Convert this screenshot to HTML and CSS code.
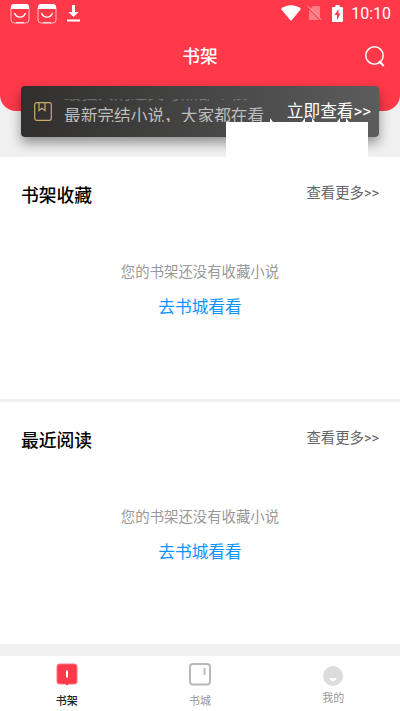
FILE: index.html
```html
<!DOCTYPE html>
<html lang="zh-CN">
<head>
    <meta charset="UTF-8">
    <meta name="viewport" content="width=device-width, initial-scale=1.0">
    <title>书架</title>
    <link rel="stylesheet" href="styles.css">
</head>
<body>
    <header class="header">
        <div class="status-bar">
            <div class="status-left">
                <svg class="app-icon" width="20" height="20" viewBox="0 0 20 20">
                    <rect x="1" y="1" width="18" height="18" rx="3" fill="none" stroke="#fff" stroke-opacity=".65"/>
                    <path d="M1 5V3a3 3 0 0 1 3-3h12a3 3 0 0 1 3 3v2zM6 18.200h8v1H6z" fill="#fff"/>
                    <path d="M4.500 9c2 5.500 9 5.500 11 0" fill="none" stroke="#fff" stroke-width="1.300"/>
                </svg>
                <svg class="app-icon" width="20" height="20" viewBox="0 0 20 20">
                    <rect x="1" y="1" width="18" height="18" rx="3" fill="none" stroke="#fff" stroke-opacity=".65"/>
                    <path d="M1 5V3a3 3 0 0 1 3-3h12a3 3 0 0 1 3 3v2zM6 18.200h8v1H6z" fill="#fff"/>
                    <path d="M4.500 9c2 5.500 9 5.500 11 0" fill="none" stroke="#fff" stroke-width="1.300"/>
                </svg>
                <svg class="download-icon" width="13" height="18" viewBox="0 0 13 18">
                    <path d="M5 1h3v7h3.500l-5 5-5-5H5zM0 15.500h13v2H0z" fill="#fff"/>
                </svg>
            </div>
            <div class="status-right">
                <svg width="20" height="16" viewBox="0 0 20 16">
                    <path d="M0 4C5-1 15-1 20 4L10 16z" fill="#fff"/>
                </svg>
                <svg class="sim-icon" width="15" height="16" viewBox="0 0 15 16">
                    <path d="M6 1h6a1 1 0 0 1 1 1v13H2V5z" fill="#fff" fill-opacity=".35"/>
                    <path d="M.500 2l14 14" stroke="#ff384a" stroke-width="1.500"/>
                    <path d="M.500 1l14 14" stroke="#fff" stroke-opacity=".55"/>
                </svg>
                <svg class="battery-icon" width="11" height="17" viewBox="0 0 11 17">
                    <path d="M3.500 0h4v2H10a1 1 0 0 1 1 1v13a1 1 0 0 1-1 1H1a1 1 0 0 1-1-1V3a1 1 0 0 1 1-1h2.500z" fill="#fff"/>
                    <path d="M6.500 4L2.500 10H5v5l3.500-6.500H6.500z" fill="#ff384a"/>
                </svg>
                <span class="time">10:10</span>
            </div>
        </div>
        <div class="title-bar">
            <h1>书架</h1>
            <svg class="search-icon" width="20" height="21" viewBox="0 0 20 21">
                <circle cx="9.500" cy="9.500" r="8.700" fill="none" stroke="#fff" stroke-width="1.500"/>
                <path d="M14.500 15.500l3.800 4" stroke="#fff" stroke-width="2" stroke-linecap="round"/>
            </svg>
        </div>
    </header>

    <div class="notice">
        <svg class="book-icon" width="18" height="19" viewBox="0 0 18 19">
            <rect x=".7" y=".7" width="16.600" height="17.600" rx="2" fill="none" stroke="#cba96f" stroke-width="1.200"/>
            <path d="M5 1v7.500l3-2.200 3 2.200V1" fill="none" stroke="#cba96f" stroke-width="1.200"/>
        </svg>
        <div class="ticker">
            <p class="ticker-old">最强兵刑追艾可热都个很</p>
            <p>最新完结小说，大家都在看</p>
        </div>
        <a class="notice-link" href="#">立即查看&gt;&gt;</a>
        <div class="popup">
            <svg width="142" height="4" viewBox="0 0 142 4">
                <path d="M44 0l3 4h-3zM76 4l3-4v4zM86 0l3 4h-3zM111 4l3-4v4zM120 0l3 4h-3z" fill="#fff"/>
            </svg>
        </div>
    </div>

    <main>
        <section class="panel">
            <div class="panel-head">
                <h2>书架收藏</h2>
                <a href="#">查看更多&gt;&gt;</a>
            </div>
            <p class="empty">您的书架还没有收藏小说</p>
            <a class="go" href="#">去书城看看</a>
        </section>
        <section class="panel">
            <div class="panel-head">
                <h2>最近阅读</h2>
                <a href="#">查看更多&gt;&gt;</a>
            </div>
            <p class="empty">您的书架还没有收藏小说</p>
            <a class="go" href="#">去书城看看</a>
        </section>
    </main>

    <nav class="tab-bar">
        <a class="tab active" href="#">
            <svg width="22" height="23" viewBox="0 0 22 23">
                <rect x=".5" y=".5" width="21" height="21" rx="3.500" fill="#ff7582"/>
                <path d="M4 1.500h14a2.500 2.500 0 0 1 2.500 2.500v14a2.500 2.500 0 0 1-2.500 2.500h-5L11 22.500 9 20.500H4A2.500 2.500 0 0 1 1.500 18V4A2.500 2.500 0 0 1 4 1.500z" fill="#ff384a"/>
                <path d="M10 7.500h2v7h-2z" fill="#fff"/>
            </svg>
            <span>书架</span>
        </a>
        <a class="tab" href="#">
            <svg width="22" height="23" viewBox="0 0 22 23">
                <rect x="1" y="1" width="20" height="20.500" rx="3" fill="none" stroke="#b8b8b8" stroke-width="2"/>
                <path d="M15.500 5v7" stroke="#b8b8b8" stroke-width="1.800"/>
            </svg>
            <span>书城</span>
        </a>
        <a class="tab mine" href="#">
            <svg width="20" height="20" viewBox="0 0 20 20">
                <circle cx="10" cy="10" r="10" fill="#dcdcdc"/>
                <path d="M6.500 11.500l1.500.8h4l1.500-.8c0 5-7 5-7 0z" fill="#fff"/>
            </svg>
            <span>我的</span>
        </a>
    </nav>
</body>
</html>
```
FILE: styles.css
```css
* {
    box-sizing: border-box;
}
body {
    font-family: Roboto, "Noto Sans CJK SC", sans-serif;
    margin: 0;
    height: 711px;
    overflow: hidden;
    background-color: #f0f0f0;
    display: flex;
    flex-direction: column;
}
h1, h2, p {
    margin: 0;
}
a {
    text-decoration: none;
}
svg {
    display: block;
    flex: none;
}
.header {
    height: 111px;
    flex: none;
    background-color: #ff384a;
    border-radius: 0 0 16px 16px;
    color: white;
}
.status-bar {
    height: 28px;
    display: flex;
    justify-content: space-between;
    padding: 4px 9px 0 10px;
}
.status-left, .status-right {
    display: flex;
}
.app-icon {
    margin-right: 6.5px;
}
.download-icon {
    margin-left: 4px;
}
.status-right svg {
    margin-top: 1px;
}
.status-right .sim-icon {
    margin: 1px 0 0 6px;
}
.status-right .battery-icon {
    margin-left: 10px;
}
.time {
    margin-left: 8px;
    font-size: 16px;
    line-height: 20px;
}
.title-bar {
    height: 56px;
    display: flex;
    align-items: center;
    padding: 0 15px 0 35px;
}
h1 {
    flex: 1;
    margin-top: -3px;
    text-align: center;
    font-size: 17.7px;
    font-weight: 500;
}
.notice {
    position: relative;
    flex: none;
    height: 51px;
    margin: -25px 21px 20px;
    padding: 0 8px 0 13px;
    display: flex;
    align-items: center;
    border-radius: 4px;
    background: linear-gradient(to right, #302f2e, #5c5c5c);
    box-shadow: 0 6px 12px rgba(0, 0, 0, 0.4);
}
.ticker {
    height: 23px;
    width: 210px;
    margin: -2px 0 0 12px;
    overflow: hidden;
    color: #bdbdbd;
    font-size: 16.7px;
    line-height: 22px;
    white-space: nowrap;
}
.ticker .ticker-old {
    margin: -16px 0 1px;
    opacity: 0.4;
}
.notice-link {
    margin: -4px 0 0 auto;
    color: white;
    font-size: 16.7px;
    white-space: nowrap;
}
/* blank popup over the banner's corner */
.popup {
    position: absolute;
    left: 205px;
    top: 36px;
    width: 142px;
    height: 35px;
    background-color: white;
}
.popup svg {
    margin-top: -4px;
}
.panel {
    height: 242px;
    margin-bottom: 3px;
    padding: 26px 21px 0;
    background-color: white;
    text-align: center;
}
.panel-head {
    display: flex;
    justify-content: space-between;
    height: 76px;
}
h2 {
    color: black;
    font-size: 17.8px;
    font-weight: 500;
    line-height: 26px;
}
.panel-head a {
    color: #666;
    font-size: 14.4px;
    line-height: 22px;
}
.empty {
    color: #999;
    font-size: 14.4px;
    line-height: 28px;
}
.go {
    display: block;
    color: #0d94ff;
    font-size: 16.7px;
    line-height: 28px;
    margin-top: 7px;
}
.tab-bar {
    margin-top: auto;
    height: 55px;
    flex: none;
    display: flex;
    background-color: white;
}
.tab {
    flex: 1;
    display: flex;
    flex-direction: column;
    align-items: center;
    padding-top: 7px;
    color: #999;
    font-size: 11px;
    line-height: 16px;
}
.tab span {
    margin-top: 8px;
}
.tab.active {
    color: #222;
}
.tab.active span {
    font-weight: 500;
}
.tab.mine {
    padding-top: 10px;
}
.tab.mine span {
    margin-top: 5px;
}
```
